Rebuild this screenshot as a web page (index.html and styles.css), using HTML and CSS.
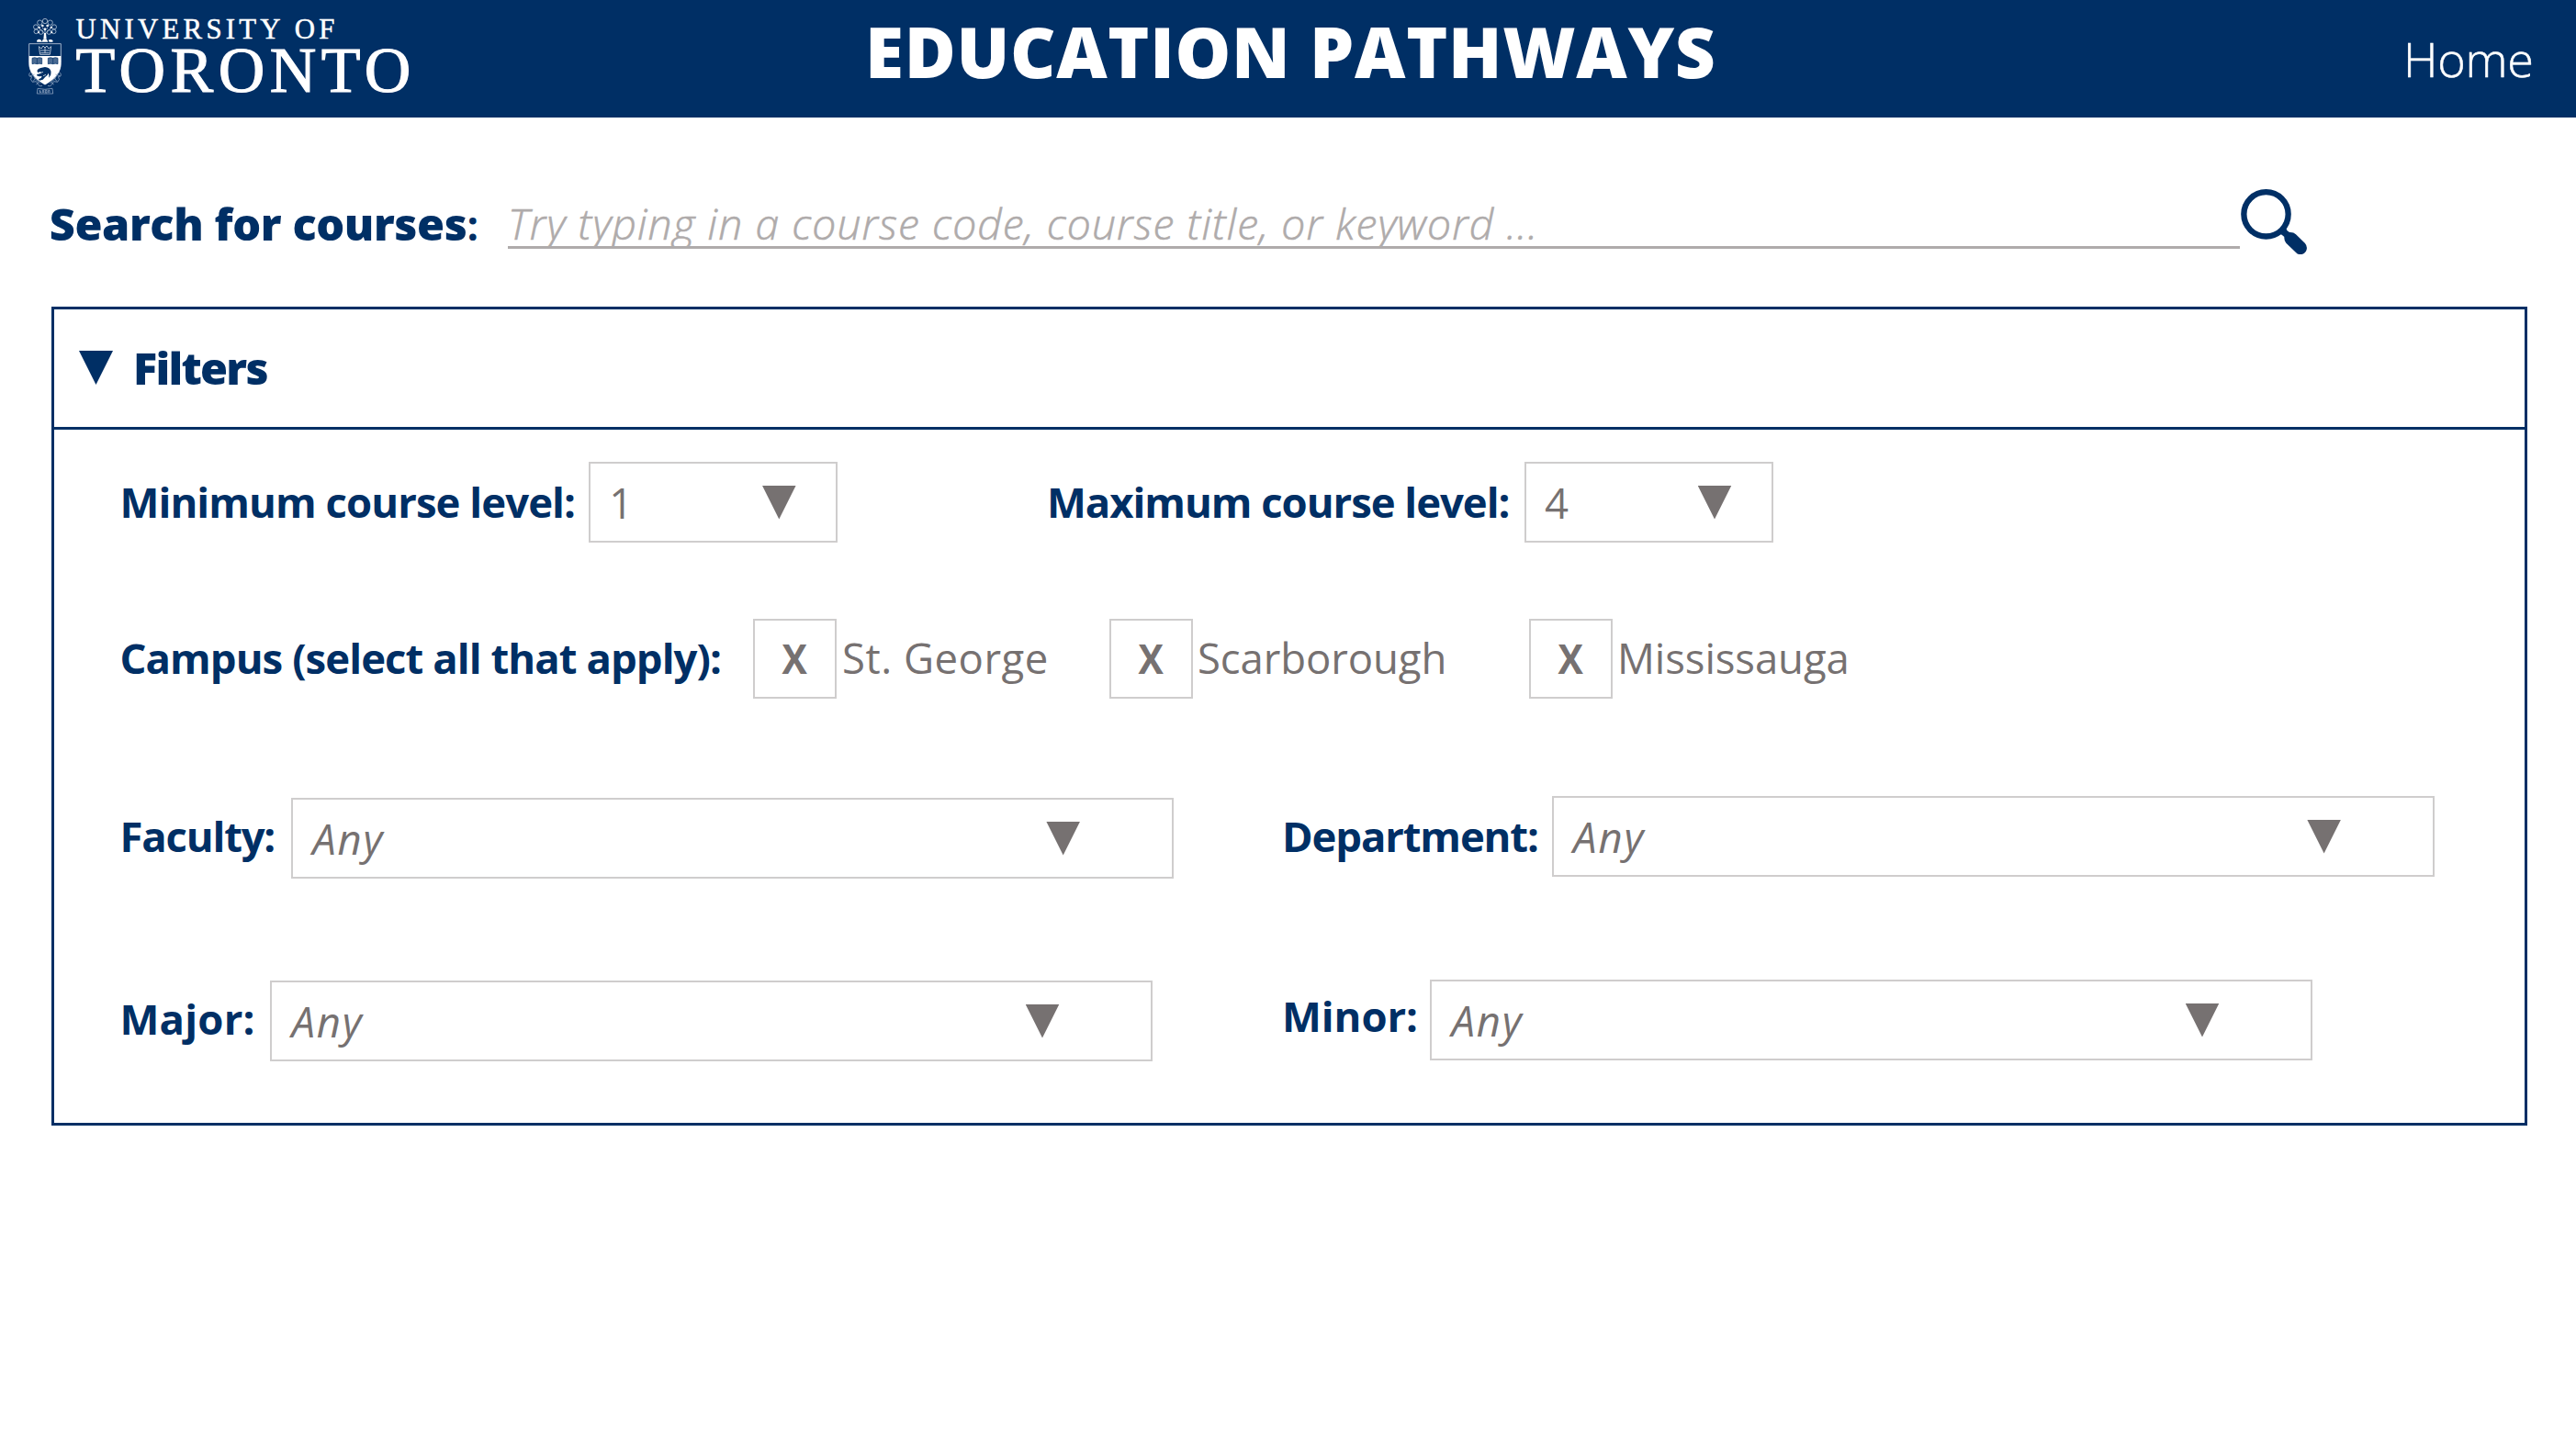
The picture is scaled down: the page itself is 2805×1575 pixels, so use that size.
FILE: index.html
```html
<!DOCTYPE html>
<html lang="en">
<head>
<meta charset="utf-8">
<title>Education Pathways</title>
<link rel="stylesheet" href="styles.css">
</head>
<body>
<header class="topbar">
  <div class="logo">
    <svg class="crest" viewBox="93 57 108 252" fill="none" stroke="#fff" stroke-width="2.4" aria-hidden="true">
      <g stroke="#b9c6d8">
        <circle cx="147" cy="69" r="8"/><circle cx="130" cy="74" r="8"/><circle cx="164" cy="74" r="8"/>
        <circle cx="117" cy="88" r="7.500"/><circle cx="177" cy="88" r="7.500"/>
        <circle cx="118" cy="103" r="7"/><circle cx="176" cy="103" r="7"/>
        <circle cx="134" cy="105" r="7"/><circle cx="160" cy="105" r="7"/>
        <path d="M147 128V92M147 112L128 92M147 112L166 92M138 90L147 100L156 90"/>
      </g>
      <g fill="#fff" stroke="none">
        <circle cx="139" cy="84" r="4"/><circle cx="155" cy="84" r="4"/><circle cx="128" cy="90" r="3.500"/><circle cx="167" cy="90" r="3.500"/>
        <circle cx="147" cy="95" r="3.500"/><circle cx="126" cy="106" r="3"/><circle cx="169" cy="106" r="3"/>
        <path d="M144 108h6l2 20h-10z"/>
        <path d="M120 133q6-7 13-3l5 7h-17zM140 129h13l4 8h-20zM158 131q8-5 15 2l-1 4h-11z"/>
      </g>
      <path d="M95 143H199V205C199 235 182 256 147 276C112 256 95 235 95 205Z" stroke="#c9d3e1"/>
      <path d="M127 152l8 7 6-9 6 6 6-6 6 9 8-7-4 26h-32zM132 165h30M133 173h28M147 153v20" stroke="#d5dde8"/>
      <path fill="#fff" stroke="none" d="M95 183H199V207C199 236 182 257 147 277C112 257 95 236 95 207Z"/>
      <g fill="#4a6b93" stroke="#002f65" stroke-width="2">
        <path d="M105 190q8-4 16 0q8-4 16 0v19q-8-3-16 0q-8-3-16 0zM121 190v19"/>
        <path d="M157 190q8-4 16 0q8-4 16 0v19q-8-3-16 0q-8-3-16 0zM173 190v19"/>
      </g>
      <path fill="#002f65" stroke="none" d="M121 231q3-8 12-9l14-3q15 1 19 13q3 14-7 22q3-9-1-15q-3 9-10 12l-8 9-11 3-3-4 8-4 3-6-9 1-8-3 1-4 9-2 6-5-7-1-5 3z"/>
      <path d="M131 239l10-4M141 248l9-4" stroke="#fff" stroke-width="2"/>
      <g stroke="#9db0c9" stroke-width="2.200">
        <path d="M101 235q-9 6-5 14l8 2q-8 8 2 17l12-2 8 12q5 6 12 2M105 240q8 20 26 32M99 248l14-5M108 266l9-12M118 276l10-8"/>
        <path d="M193 235q9 6 5 14l-8 2q8 8-2 17l-12-2-8 12q-5 6-12 2M189 240q-8 20-26 32M195 248l-14-5M186 266l-9-12M176 276l-10-8"/>
        <path d="M123 289l-2 17h52l-2-17q-24 6-48 0zM130 303v-8l4 8M139 303v-8h4v8M148 303v-8h5v8h-5M158 303v-8h4v8"/>
      </g>
    </svg>
    <div class="wordmark">
      <span class="wordmark-top">UNIVERSITY OF</span>
      <span class="wordmark-main">TORONTO</span>
    </div>
  </div>
  <h1 class="title">EDUCATION PATHWAYS</h1>
  <a class="home">Home</a>
</header>

<main>
  <form class="search">
    <label class="search-label" for="q">Search for courses<span class="colon">:</span></label>
    <input class="search-input" id="q" type="text" placeholder="Try typing in a course code, course title, or keyword ...">
    <svg class="search-icon" viewBox="120 617 216 214" aria-hidden="true">
      <circle cx="202.500" cy="699" r="72.500" fill="none" stroke="#002f65" stroke-width="19"/>
      <path fill="#002f65" d="M248 764L267 742L271 752L279 758Q292 757 300 765L330 794Q340 806 333 820Q322 836 304 828L268 793Q261 784 262 773L254 766Z"/>
    </svg>
  </form>

  <section class="panel">
    <div class="panel-head"><span class="arrow arrow-navy"></span><h2 class="panel-title">Filters</h2></div>
    <div class="panel-body">
      <div class="row row-levels">
        <div class="field"><span class="label label-min">Minimum course level:</span><div class="select select-sm"><span>1</span><span class="arrow"></span></div></div>
        <div class="field"><span class="label label-max">Maximum course level:</span><div class="select select-sm"><span>4</span><span class="arrow"></span></div></div>
      </div>
      <div class="row row-campus">
        <span class="label label-campus">Campus (select all that apply):</span>
        <div class="option option-sg"><span class="check"><b>X</b></span><span class="option-text">St. George</span></div>
        <div class="option option-sc"><span class="check"><b>X</b></span><span class="option-text option-scar">Scarborough</span></div>
        <div class="option"><span class="check"><b>X</b></span><span class="option-text option-miss">Mississauga</span></div>
      </div>
      <div class="row row-faculty">
        <div class="field field-low2"><span class="label label-faculty">Faculty:</span><div class="select select-lg"><em>Any</em><span class="arrow"></span></div></div>
        <div class="field"><span class="label label-department">Department:</span><div class="select select-lg"><em>Any</em><span class="arrow"></span></div></div>
      </div>
      <div class="row row-major">
        <div class="field field-low1"><span class="label label-major">Major:</span><div class="select select-lg"><em>Any</em><span class="arrow"></span></div></div>
        <div class="field"><span class="label label-minor">Minor:</span><div class="select select-lg"><em>Any</em><span class="arrow"></span></div></div>
      </div>
    </div>
  </section>
</main>
</body>
</html>
```
FILE: styles.css
```css
* { box-sizing: border-box; }

body {
  margin: 0;
  background: #fff;
  color: #767171;
  font: 400 45.5px "Open Sans", "Noto Sans", sans-serif;
  white-space: nowrap;
}

h1, h2 { margin: 0; }

/* Top bar */
.topbar {
  display: grid;
  grid-template-columns: 942px 1675px 1fr;
  height: 128px;
  background: #002f65;
  color: #fff;
}

.logo { display: flex; padding: 17.6px 0 0 31px; gap: 15.5px; }
.crest { width: 36px; height: 84px; margin-top: 1.4px; }
.wordmark { display: flex; flex-direction: column; font-family: "Liberation Serif", serif; }
.wordmark-top { font-size: 30.8px; line-height: 29.6px; letter-spacing: 4.26px; -webkit-text-stroke: 0.5px #fff; }
.wordmark-main { font-size: 70px; line-height: 60px; letter-spacing: 5.5px; -webkit-text-stroke: 1.2px #fff; }

.title { font-size: 76.4px; font-weight: 800; line-height: 111px; letter-spacing: 0.7px; }
.home { font-size: 52.1px; font-weight: 300; line-height: 128px; letter-spacing: -0.3px; -webkit-text-stroke: 0.5px #fff; }

/* Search */
.search { display: flex; align-items: flex-start; height: 206px; padding: 77px 0 0 53.8px; }
.search-label {
  width: 499.2px;
  margin-top: 13px;
  color: #002f65;
  font-size: 48.6px;
  font-weight: 800;
  line-height: 50px;
  letter-spacing: -0.4px;
}
.colon { font-size: 44px; font-weight: 700; }
.search-input {
  width: 1886px;
  height: 54px;
  margin-top: 12px;
  padding: 2px 0 0;
  border: 0;
  border-bottom: 3px solid #afabab;
  outline: 0;
  background: none;
  font: italic 300 46.2px "Open Sans", sans-serif;
  letter-spacing: 1.12px;
}
.search-input::placeholder { color: #afabab; opacity: 1; -webkit-text-stroke: 0.6px #afabab; }
.search-icon { width: 72px; height: 71.3px; margin: 0.7px 0 0 1px; }

/* Filter panel */
.panel { width: 2696px; height: 892px; margin-left: 56px; border: 3px solid #002f65; }
.panel-head {
  display: flex;
  align-items: flex-start;
  height: 131px;
  padding-left: 27px;
  border-bottom: 3px solid #002f65;
}
.panel-head .arrow { margin-top: 45px; }
.panel-title {
  margin-left: 22px;
  color: #002f65;
  font-size: 48.6px;
  font-weight: 800;
  letter-spacing: -1.75px;
  line-height: 126px;
}
.panel-body { padding: 35px 0 0 70.5px; }

.arrow {
  flex: none;
  width: 37px;
  height: 37px;
  background: #767171;
  clip-path: polygon(0 0, 100% 0, 50% 100%);
}
.arrow-navy { background: #002f65; }

.row { display: grid; align-items: start; }
.row-levels { grid-template-columns: 1009.5px 1fr; height: 88px; }
.row-campus { display: flex; height: 87px; margin-top: 83px; }
.row-faculty { grid-template-columns: 1265.5px 1fr; height: 89px; margin-top: 106px; }
.row-major { grid-template-columns: 1265.5px 1fr; height: 89px; margin-top: 111px; }

.field { display: flex; align-items: flex-start; }
.field-low1 { margin-top: 1px; }
.field-low2 { margin-top: 2px; }

.label { padding-left: 1px; color: #002f65; font-weight: 700; letter-spacing: -0.95px; }
.label-min { width: 511.8px; line-height: 86px; }
.label-max { width: 521px; line-height: 86px; letter-spacing: -1.05px; }
.label-campus { width: 690.5px; line-height: 84px; }
.label-faculty { width: 187.2px; line-height: 82px; letter-spacing: -1.2px; }
.label-department { width: 294.6px; line-height: 86px; letter-spacing: -1.15px; }
.label-major { width: 164.5px; line-height: 82px; letter-spacing: 0.2px; }
.label-minor { width: 162px; line-height: 78px; letter-spacing: -0.1px; }

.select {
  display: flex;
  align-items: center;
  justify-content: space-between;
  height: 88px;
  border: 2px solid #cfcdcd;
}
.select-sm { width: 271px; padding: 0 43.5px 0 20px; }
.select-lg { width: 961px; padding: 0 99.5px 0 21.5px; }
.select em { letter-spacing: 1.8px; }

.option { display: flex; align-items: flex-start; }
.option-sg { width: 388px; }
.option-sc { width: 457px; }
.check {
  width: 91px;
  height: 87px;
  border: 2px solid #cfcdcd;
  line-height: 80px;
  text-align: center;
}
.check b { display: inline-block; transform: scaleX(0.9); }
.option-text { margin-left: 6px; line-height: 84px; letter-spacing: 0.5px; }
.option-scar { margin-left: 5px; letter-spacing: -0.1px; }
.option-miss { margin-left: 5px; letter-spacing: -0.1px; }
```
